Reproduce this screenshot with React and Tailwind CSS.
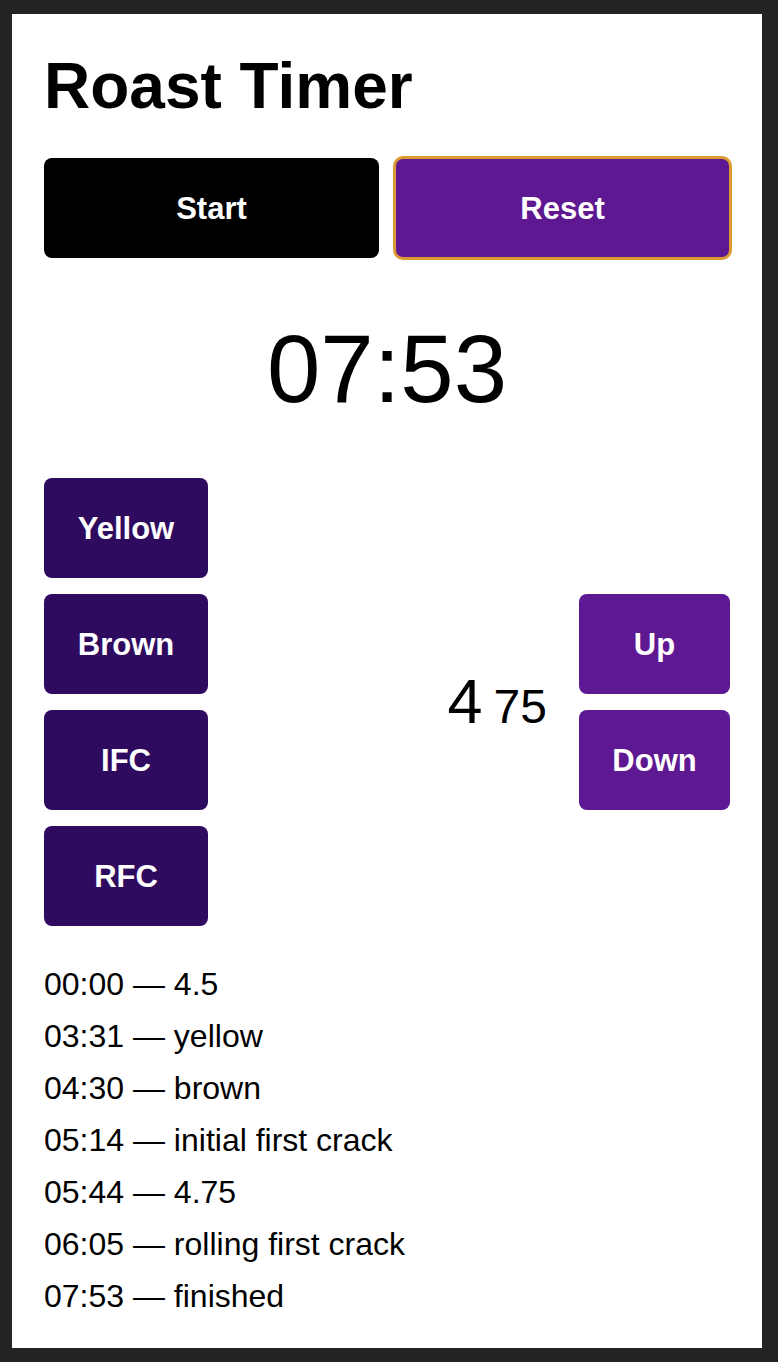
import React from 'react';

const events = [
  ['00:00', '4.5'],
  ['03:31', 'yellow'],
  ['04:30', 'brown'],
  ['05:14', 'initial first crack'],
  ['05:44', '4.75'],
  ['06:05', 'rolling first crack'],
  ['07:53', 'finished'],
];

const btn = 'h-[100px] rounded-lg pt-1 text-[31px] font-bold text-white';

const App = () => {
  return (
    <div className="h-screen bg-[#232325] pl-3 pr-4 py-[14px] font-['Liberation_Sans',Arial,sans-serif]">
      <div className="h-full bg-white px-8 pt-9 text-black">
        {/* Title */}
        <h1 className="text-[64px] font-bold leading-[1.15]">Roast Timer</h1>

        {/* Controls */}
        <div className="mt-[34px] grid grid-cols-2 gap-4">
          <button className={`${btn} bg-black`}>Start</button>
          <button className={`${btn} bg-[#5e1891] outline-3 outline-solid outline-[#dd9933] outline-offset-[-1px]`}>
            Reset
          </button>
        </div>

        {/* Clock */}
        <div className="mt-[56px] text-center text-[96px] leading-[110px]">07:53</div>

        {/* Events + heat */}
        <div className="mt-[54px] flex items-center justify-between">
          <div className="flex flex-col gap-4">
            {['Yellow', 'Brown', 'IFC', 'RFC'].map(label => (
              <button key={label} className={`${btn} w-[164px] bg-[#2e0b5f]`}>
                {label}
              </button>
            ))}
          </div>

          <div className="flex items-center gap-[32px]">
            <div className="flex items-baseline gap-[11px] leading-none">
              <span className="text-[63px]">4</span>
              <span className="text-[48px]">75</span>
            </div>
            <div className="flex flex-col gap-4">
              <button className={`${btn} w-[151px] bg-[#5e1891]`}>Up</button>
              <button className={`${btn} w-[151px] bg-[#5e1891]`}>Down</button>
            </div>
          </div>
        </div>

        {/* Log */}
        <ul className="mt-8 text-[32px] leading-[52px]">
          {events.map(([time, what]) => (
            <li key={time}>
              {time} — {what}
            </li>
          ))}
        </ul>
      </div>
    </div>
  );
};

export default App;
